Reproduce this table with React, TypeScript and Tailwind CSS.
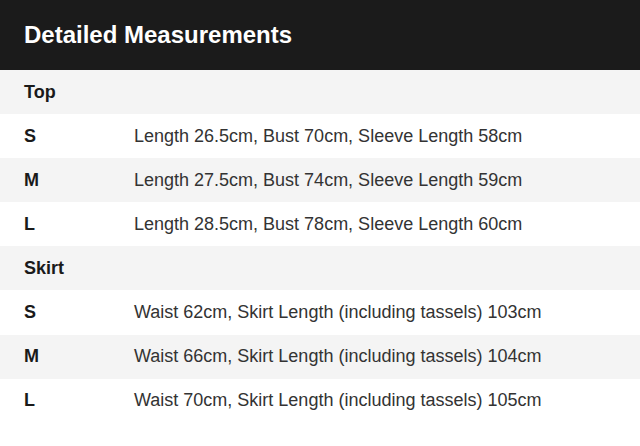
import React from "react";

type Row = { size: string; detail?: string; group?: boolean };

const rows: Row[] = [
    { size: "Top", group: true },
    { size: "S", detail: "Length 26.5cm, Bust 70cm, Sleeve Length 58cm" },
    { size: "M", detail: "Length 27.5cm, Bust 74cm, Sleeve Length 59cm" },
    { size: "L", detail: "Length 28.5cm, Bust 78cm, Sleeve Length 60cm" },
    { size: "Skirt", group: true },
    { size: "S", detail: "Waist 62cm, Skirt Length (including tassels) 103cm" },
    { size: "M", detail: "Waist 66cm, Skirt Length (including tassels) 104cm" },
    { size: "L", detail: "Waist 70cm, Skirt Length (including tassels) 105cm" },
];

export default function App() {
    return (
        <div className="w-[640px] min-h-[446px] bg-white font-['Liberation_Sans',Arial,sans-serif]">
            <div className="h-[70px] bg-[#1b1b1b] flex items-center px-6">
                <h2 className="text-[24px] font-bold text-white">Detailed Measurements</h2>
            </div>

            {rows.map((row, index) => (
                <div
                    key={index}
                    className={`grid grid-cols-[110px_1fr] items-center h-[44.1px] px-6 ${
                        index % 2 === 0 ? "bg-[#f4f4f4]" : "bg-white"
                    }`}
                >
                    <div className="text-[18px] font-bold text-[#1a1a1a]">{row.size}</div>
                    <div className="text-[18px] text-[#333333]">{row.detail}</div>
                </div>
            ))}
        </div>
    );
}
